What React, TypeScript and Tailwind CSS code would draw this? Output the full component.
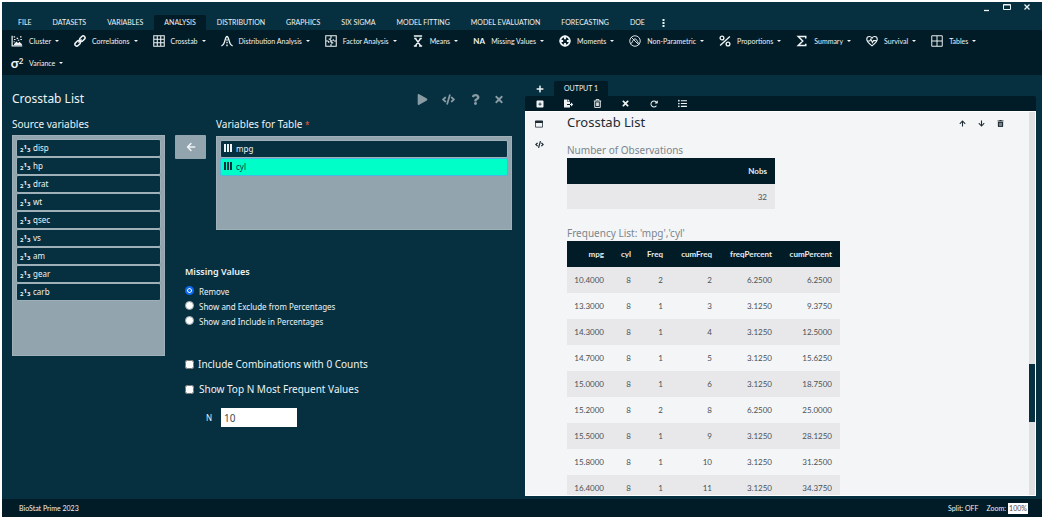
import React, { useState } from "react";
import {
  FaArrowDown,
  FaArrowLeft,
  FaArrowUp,
  FaCode,
  FaFileExport,
  FaListUl,
  FaPlay,
  FaPlus,
  FaQuestion,
  FaRegWindowMaximize,
  FaTimes,
  FaTrashAlt,
} from "react-icons/fa";
import { FaArrowRotateRight, FaSquarePlus } from "react-icons/fa6";

const tabs = [
  "FILE",
  "DATASETS",
  "VARIABLES",
  "ANALYSIS",
  "DISTRIBUTION",
  "GRAPHICS",
  "SIX SIGMA",
  "MODEL FITTING",
  "MODEL EVALUATION",
  "FORECASTING",
  "DOE",
];

function Line({ children, width = 1.4 }: { children: React.ReactNode; width?: number }) {
  return (
    <svg viewBox="0 0 16 16" className="size-3" fill="none" stroke="currentColor" strokeWidth={width} aria-hidden="true">
      {children}
    </svg>
  );
}

const ClusterIcon = () => (
  <Line width={1.6}>
    <path d="M1.500 1v13.500H15" />
    <path d="M4 12.500l3-4 2.500 2 2-1.500 3 3.500z" fill="currentColor" stroke="none" />
    <path d="M3.500 2.500h2M4 6h2M7.500 4.500h2M9 7h2M12 2.500h2M12.500 6h2M3.500 9h1.500M4 12.500h10.500" />
  </Line>
);

const CorrelationsIcon = () => (
  <Line width={2}>
    <g transform="rotate(-45 8 8)">
      <rect x="-0.500" y="5.500" width="8" height="5" rx="2.500" />
      <rect x="8.500" y="5.500" width="8" height="5" rx="2.500" />
      <path d="M5 8h6" />
    </g>
  </Line>
);

const CrosstabIcon = () => (
  <Line width={1.4}>
    <path d="M1 1h14v14H1zM5.700 1v14M10.300 1v14M1 5.700h14M1 10.300h14" />
  </Line>
);

const DistributionIcon = () => (
  <Line width={1.800}>
    <path d="M0.500 14.300C3.500 14 4.500 10.500 5.500 6.500 6.200 3.700 6.900 2 8 2s1.800 1.700 2.500 4.500c1 4 2 7.500 5 7.800" />
    <path d="M8 5.500v2M8 9v2M8 12.500v2.500" />
  </Line>
);

const FactorIcon = () => (
  <Line width={1.400}>
    <path d="M1 1h14v14H1zM8 1v3.500M8 6.500V10M8 12v3M1 8h3.500M6.500 8H10M12 8h3M5 5.500h3M8 10.500h3M5 8v2.500M11 5.500V8" />
  </Line>
);

const MeansIcon = () => (
  <Line width={2}>
    <path d="M2.500 1.300h11M4.500 4.500l7 10M11.500 4.500l-7 10M2.500 14.500h4M9.500 14.500h4M3 4.500h3M10 4.500h3" />
  </Line>
);

const MomentsIcon = () => (
  <Line width={2.600}>
    <circle cx="8" cy="8" r="6.300" />
    <path d="M8 1v4.500M8 10.500V15M1 8h4.500M10.500 8H15" />
  </Line>
);

const NonParametricIcon = () => (
  <Line width={1.200}>
    <circle cx="8" cy="8" r="7" />
    <path d="M3 3l10 10M2 12c2.500-.5 3-7 6-7s3.500 6.500 6 7" />
  </Line>
);

const ProportionsIcon = () => (
  <Line width={1.800}>
    <circle cx="4" cy="4" r="2.500" />
    <circle cx="12" cy="12" r="2.500" />
    <path d="M14.500 2l-13 12" />
  </Line>
);

const SigmaIcon = () => (
  <Line width={2}>
    <path d="M13 4.500V2H3l6 6-6 6h10v-2.500" />
  </Line>
);

const SurvivalIcon = () => (
  <Line width={1.500}>
    <path d="M8 14.500C4.500 11.800 1 9 1 5.700 1 3.500 2.600 2 4.500 2 6 2 7.300 2.900 8 4.200 8.700 2.900 10 2 11.500 2 13.400 2 15 3.500 15 5.700c0 3.300-3.500 6.100-7 8.800z" />
    <path d="M1.500 8H5l1.500-2.500 2 4.500L10 7.500h4.500" />
  </Line>
);

const TablesIcon = () => (
  <Line width={1.300}>
    <path d="M1 1h14v14H1zM8 1v14M1 8h14" />
  </Line>
);

const NaIcon = () => <span className="text-[8px] font-bold">NA</span>;

const VarianceIcon = () => (
  <span className="flex text-[13px] font-bold leading-3">
    σ<span className="text-[8px] leading-[8px]">2</span>
  </span>
);

const tools: { label: string; icon: React.ReactNode }[] = [
  { label: "Cluster", icon: <ClusterIcon /> },
  { label: "Correlations", icon: <CorrelationsIcon /> },
  { label: "Crosstab", icon: <CrosstabIcon /> },
  { label: "Distribution Analysis", icon: <DistributionIcon /> },
  { label: "Factor Analysis", icon: <FactorIcon /> },
  { label: "Means", icon: <MeansIcon /> },
  { label: "Missing Values", icon: <NaIcon /> },
  { label: "Moments", icon: <MomentsIcon /> },
  { label: "Non-Parametric", icon: <NonParametricIcon /> },
  { label: "Proportions", icon: <ProportionsIcon /> },
  { label: "Summary", icon: <SigmaIcon /> },
  { label: "Survival", icon: <SurvivalIcon /> },
  { label: "Tables", icon: <TablesIcon /> },
  { label: "Variance", icon: <VarianceIcon /> },
];

const sourceVariables = ["disp", "hp", "drat", "wt", "qsec", "vs", "am", "gear", "carb"];

const frequencyColumns = ["mpg", "cyl", "Freq", "cumFreq", "freqPercent", "cumPercent"];
const frequencyRows = [
  ["10.4000", "8", "2", "2", "6.2500", "6.2500"],
  ["13.3000", "8", "1", "3", "3.1250", "9.3750"],
  ["14.3000", "8", "1", "4", "3.1250", "12.5000"],
  ["14.7000", "8", "1", "5", "3.1250", "15.6250"],
  ["15.0000", "8", "1", "6", "3.1250", "18.7500"],
  ["15.2000", "8", "2", "8", "6.2500", "25.0000"],
  ["15.5000", "8", "1", "9", "3.1250", "28.1250"],
  ["15.8000", "8", "1", "10", "3.1250", "31.2500"],
  ["16.4000", "8", "1", "11", "3.1250", "34.3750"],
];

function IconButton({ label, className = "", children }: { label: string; className?: string; children: React.ReactNode }) {
  return (
    <button type="button" aria-label={label} className={`flex shrink-0 items-center justify-center ${className}`}>
      {children}
    </button>
  );
}

function MenuBar() {
  return (
    <header className="flex h-7 items-end justify-between">
      <nav className="flex gap-px pl-[6px]">
        {tabs.map((tab) => (
          <button
            key={tab}
            type="button"
            className={`h-[15px] rounded-t-[2px] px-[10px] text-[7px] leading-[15px] ${tab === "ANALYSIS" ? "bg-[#021c27]" : ""}`}
          >
            {tab}
          </button>
        ))}
        <IconButton label="More" className="h-[15px] w-4">
          <svg viewBox="0 0 4 12" className="h-2 w-[3px]" fill="currentColor" aria-hidden="true">
            <path d="M.5 0h3v3h-3zM.5 4.500h3v3h-3zM.5 9h3v3h-3z" />
          </svg>
        </IconButton>
      </nav>
      <div className="flex gap-[10px] self-start pr-[10px]">
        <IconButton label="Minimize" className="size-[10px]">
          <svg viewBox="0 0 10 10" className="size-[10px]" aria-hidden="true">
            <path d="M2 8.500h5" stroke="currentColor" strokeWidth="1.300" />
          </svg>
        </IconButton>
        <IconButton label="Maximize" className="size-[10px]">
          <svg viewBox="0 0 10 10" className="size-[10px]" fill="none" stroke="currentColor" aria-hidden="true">
            <path d="M1.500 2.500h7v5h-7zM1.500 3h7" />
          </svg>
        </IconButton>
        <IconButton label="Close" className="size-[10px]">
          <svg viewBox="0 0 10 10" className="size-[10px]" stroke="currentColor" strokeWidth="1.300" aria-hidden="true">
            <path d="M2.500 2.500l5 5M7.500 2.500l-5 5" />
          </svg>
        </IconButton>
      </div>
    </header>
  );
}

function ToolBar() {
  return (
    <div className="flex flex-wrap gap-x-[15px] bg-[#021c27] pb-px pl-[9px] pr-4">
      {tools.map(({ label, icon }) => (
        <button key={label} type="button" className="flex h-[22px] items-center text-[7px] leading-[10px]">
          <span className="mr-[6px] flex w-3 justify-center">{icon}</span>
          {label}
          <svg viewBox="0 0 4 2" className="mb-px ml-1 h-[2px] w-1" fill="currentColor" aria-hidden="true">
            <path d="M0 0h4L2 2z" />
          </svg>
        </button>
      ))}
    </div>
  );
}

function DialogPane() {
  const [missing, setMissing] = useState("Remove");
  return (
    <section className="flex min-w-0 flex-col pl-[10px] pr-[13px] pt-4 font-['Noto_Sans',sans-serif]">
      <div className="flex h-4 items-center justify-between">
        <h1 className="text-[12px] leading-4">Crosstab List</h1>
        <div className="flex items-center gap-3 pr-2 text-[#899ba4]">
          <IconButton label="Run" className="w-[11px]"><FaPlay className="size-[11px]" /></IconButton>
          <IconButton label="Syntax" className="w-4"><FaCode className="size-[13px]" /></IconButton>
          <IconButton label="Help" className="w-[14px]"><FaQuestion className="size-[11px]" /></IconButton>
          <IconButton label="Close dialog" className="w-[10px]"><FaTimes className="size-[11px]" /></IconButton>
        </div>
      </div>

      <div className="mt-[11px] flex gap-[10px] text-[10px]">
        <div className="w-[153px] shrink-0">
          <h2 className="leading-[12px]">Source variables</h2>
          <ul className="mt-[5px] flex h-[221px] flex-col border border-[#a0b0b8] bg-[#92a4ad] p-[3px]">
            {sourceVariables.map((name) => (
              <li key={name} className="flex h-[18px] items-center rounded-[2px] border border-[#9fb0b8] bg-[#06303f] pl-[3px] text-[8px] leading-[10px]">
                <span className="mr-[3px] flex w-[10px] items-end text-[6px] font-bold leading-[6px]" aria-hidden="true">
                  2<span className="mb-[3px]">1</span>3
                </span>
                {name}
              </li>
            ))}
          </ul>
        </div>
        <IconButton label="Move to source" className="mt-[17px] h-6 w-[31px] rounded-[1px] bg-[#92a4ad]">
          <FaArrowLeft className="size-[10px]" />
        </IconButton>
        <div className="min-w-0 flex-1">
          <h2 className="leading-[12px]">
            Variables for Table <span className="text-[8px] text-[#f0593c]">*</span>
          </h2>
          <ul className="mt-[5px] flex h-[94px] flex-col border border-[#a0b0b8] bg-[#92a4ad] p-[3px]">
            {["mpg", "cyl"].map((name) => (
              <li
                key={name}
                className={`flex h-[18px] items-center rounded-[2px] border pl-[3px] text-[8px] leading-[10px] ${
                  name === "cyl" ? "border-[#4cb8e0] bg-[#00ffc8] text-[#06303f]" : "border-[#9fb0b8] bg-[#06303f]"
                }`}
              >
                <svg viewBox="0 0 8 8" className="mb-[2px] mr-1 size-2" fill="currentColor" aria-hidden="true">
                  <path d="M0 0h2v8H0zM3 0h2v8H3zM6 0h2v8H6z" />
                </svg>
                {name}
              </li>
            ))}
          </ul>
        </div>
      </div>

      <form className="-mt-[90px] ml-[173px] self-start">
        <fieldset>
          <legend className="text-[9px] font-semibold leading-3">Missing Values</legend>
          <div className="mt-2 flex flex-col gap-[3px] text-[8px] leading-3">
            {["Remove", "Show and Exclude from Percentages", "Show and Include in Percentages"].map((option) => (
              <label key={option} className="flex items-start gap-[5px]">
                <input
                  type="radio"
                  name="missing"
                  checked={missing === option}
                  onChange={() => setMissing(option)}
                  className="size-[9px] appearance-none rounded-full border border-[#9aa5ab] bg-white checked:border-2 checked:border-[#0b6cf0] checked:bg-[#0b6cf0] checked:bg-radial checked:from-[#0b6cf0] checked:from-30% checked:to-white checked:to-50% checked:bg-clip-padding"
                />
                {option}
              </label>
            ))}
          </div>
        </fieldset>
        <label className="mt-[29px] flex items-center gap-1 text-[10px] leading-[14px]">
          <input type="checkbox" className="size-[9px]" />
          Include Combinations with 0 Counts
        </label>
        <label className="mt-[11px] flex items-center gap-[5px] text-[10px] leading-[14px]">
          <input type="checkbox" className="size-[9px]" />
          Show Top N Most Frequent Values
        </label>
        <label className="ml-[21px] mt-[12px] flex items-center gap-[9px] text-[8px]">
          N
          <input type="text" defaultValue="10" className="h-[19px] w-[76px] bg-white px-[3px] text-[10px] text-[#444b50]" />
        </label>
      </form>
    </section>
  );
}

function OutputPane() {
  return (
    <section className="flex min-h-0 min-w-0 flex-col pb-[3px] pr-[6px] pt-[6px]">
      <div className="flex h-[15px] items-center">
        <IconButton label="New output" className="ml-[9px] w-3"><FaPlus className="size-2" /></IconButton>
        <button type="button" className="ml-2 h-[15px] rounded-t-[2px] bg-[#021c27] px-[10px] text-[7px] leading-[15px]">
          OUTPUT 1
        </button>
      </div>
      <div className="flex h-[15px] items-center gap-[17px] rounded-t-[2px] bg-[#021c27] pl-[9px]">
        <IconButton label="Add" className="w-[11px]"><FaSquarePlus className="size-2" /></IconButton>
        <IconButton label="Export" className="w-[12px]"><FaFileExport className="size-[9px]" /></IconButton>
        <IconButton label="Delete output" className="w-[12px]">
          <svg viewBox="0 0 14 16" className="size-[9px]" fill="none" stroke="currentColor" strokeWidth="1.600" aria-hidden="true">
            <path d="M.5 3.500h13M4.500 3V1h5v2M2 3.500V15h10V3.500M5 6v6.500M7 6v6.500M9 6v6.500" />
          </svg>
        </IconButton>
        <IconButton label="Clear" className="w-[11px]"><FaTimes className="size-[9px]" /></IconButton>
        <IconButton label="Refresh" className="w-[11px]"><FaArrowRotateRight className="size-2" /></IconButton>
        <IconButton label="List" className="w-[12px]"><FaListUl className="size-[9px]" /></IconButton>
      </div>
      <div className="flex min-h-0 flex-1 overflow-hidden border border-white bg-[#f4f5f7] text-[#1d2b33]">
        <div className="flex w-[41px] shrink-0 flex-col items-start gap-[10px] pl-2 pt-[7px]">
          <IconButton label="Window" className="size-[10px]"><FaRegWindowMaximize className="size-2" /></IconButton>
          <IconButton label="Code" className="size-[10px]"><FaCode className="size-[9px]" /></IconButton>
        </div>
        <div className="min-w-0 flex-1">
          <div className="flex h-[19px] items-center justify-between">
            <h1 className="font-['Noto_Sans',sans-serif] text-[13px] leading-4">Crosstab List</h1>
            <div className="mt-1 flex gap-[9px] pr-6">
              <IconButton label="Move up" className="size-[10px]"><FaArrowUp className="size-[7px]" /></IconButton>
              <IconButton label="Move down" className="size-[10px]"><FaArrowDown className="size-[7px]" /></IconButton>
              <IconButton label="Delete" className="size-[10px]"><FaTrashAlt className="size-[7px]" /></IconButton>
            </div>
          </div>
          <h2 className="mt-3 font-['Noto_Sans',sans-serif] text-[10px] leading-[14px] text-[#7b858d]">Number of Observations</h2>
          <table className="mt-[1px] w-[208px] text-right text-[8px] leading-[10px]">
            <thead>
              <tr className="h-[26px] bg-[#021c27] text-[#e6ecef]">
                <th className="px-2 font-bold">Nobs</th>
              </tr>
            </thead>
            <tbody>
              <tr className="h-[25px] bg-[#e8e8ea] text-[#4a5156]">
                <td className="px-2">32</td>
              </tr>
            </tbody>
          </table>
          <h2 className="mt-[17px] font-['Noto_Sans',sans-serif] text-[10px] leading-[14px] text-[#7b858d]">Frequency List: 'mpg','cyl'</h2>
          <table className="mt-[1px] w-[273px] table-fixed text-right text-[8px] leading-[10px]">
            <colgroup>
              <col className="w-[45px]" />
              <col className="w-[27px]" />
              <col className="w-[32px]" />
              <col className="w-[49px]" />
              <col className="w-[60px]" />
              <col className="w-[60px]" />
            </colgroup>
            <thead>
              <tr className="h-[26px] bg-[#021c27] text-[#e6ecef]">
                {frequencyColumns.map((column) => (
                  <th key={column} className="pr-2 font-bold">{column}</th>
                ))}
              </tr>
            </thead>
            <tbody>
              {frequencyRows.map((row) => (
                <tr key={row[0]} className="h-[26px] text-[#4a5156] odd:bg-[#e8e8ea]">
                  {row.map((value, index) => (
                    <td key={index} className="pr-2">{value}</td>
                  ))}
                </tr>
              ))}
            </tbody>
          </table>
        </div>
        <div className="flex w-[6px] shrink-0 flex-col bg-[#dfe0e2]">
          <div className="flex-[251]" />
          <div className="flex-[58] bg-[#06303f]" />
          <div className="flex-[73]" />
        </div>
      </div>
    </section>
  );
}

export default function App() {
  return (
    <div className="h-screen bg-white p-[2px]">
      <div className="flex h-full flex-col bg-[#06303f] font-['Lato','Noto_Sans',sans-serif] text-[#eef3f5]">
        <MenuBar />
        <ToolBar />
        <main className="grid min-h-0 flex-1 grid-cols-[523fr_517fr] grid-rows-1">
          <DialogPane />
          <OutputPane />
        </main>
        <footer className="flex h-[18px] shrink-0 items-center justify-between bg-[#021c27] pl-[17px] pr-[14px] text-[7px] leading-[10px]">
          <span>BioStat Prime 2023</span>
          <div className="flex items-center gap-2">
            <span>Split: OFF</span>
            <label className="flex items-center gap-[2px]">
              Zoom:
              <input type="text" defaultValue="100%" className="h-[11px] w-5 bg-white text-center text-[7px] text-[#444b50]" />
            </label>
          </div>
        </footer>
      </div>
    </div>
  );
}
